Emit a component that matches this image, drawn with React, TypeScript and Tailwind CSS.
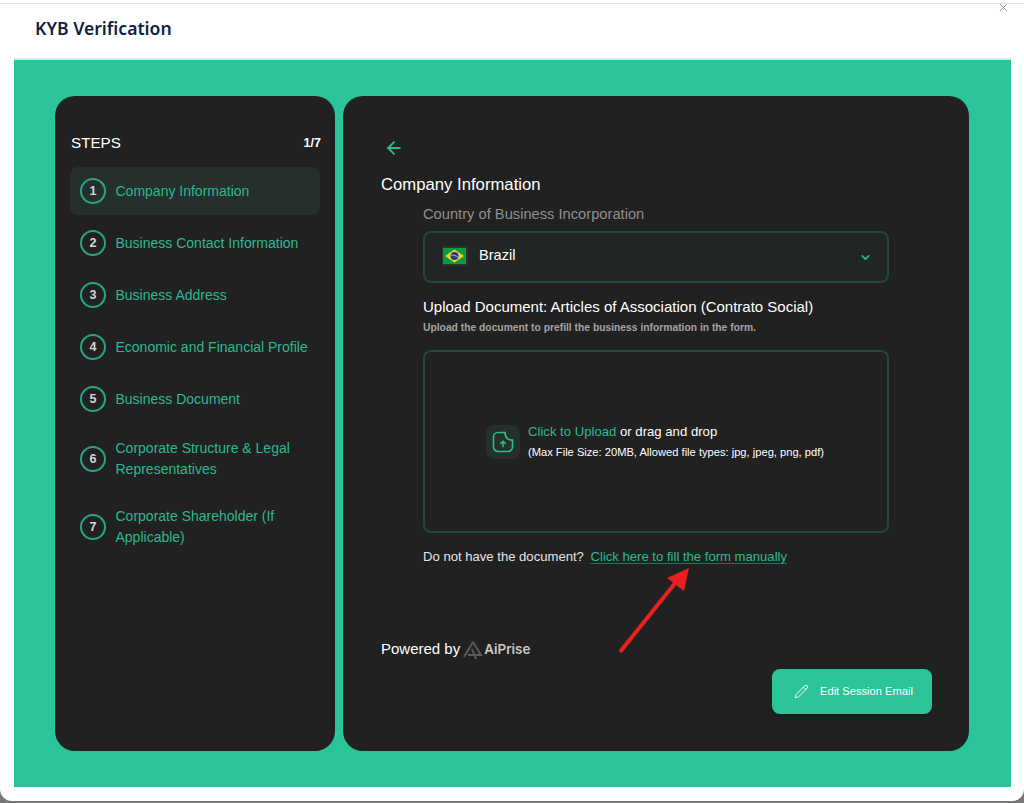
import { ArrowLeft, ChevronDown, Pencil, X } from "lucide-react";

const steps = [
  "Company Information",
  "Business Contact Information",
  "Business Address",
  "Economic and Financial Profile",
  "Business Document",
  "Corporate Structure & Legal Representatives",
  "Corporate Shareholder (If Applicable)",
];

function StepsPanel() {
  return (
    <div className="w-[280px] h-[655px] shrink-0 rounded-[20px] bg-[#212121] pl-[15px] pr-[14px] pt-[37px]">
      <div className="flex items-center justify-between h-[20px] mb-[14px]">
        <span className="ml-[1px] text-[15.2px] text-white">STEPS</span>
        <span className="text-[12.5px] font-bold text-white">1/7</span>
      </div>
      <div className="flex flex-col gap-1 mr-[1px]">
        {steps.map((step, i) => (
          <div
            key={step}
            className={`flex items-center gap-[9.5px] min-h-[48px] py-[11px] px-[10px] rounded-lg ${i === 0 ? "bg-[#252f2c]" : ""}`}
          >
            <div className="w-[26px] h-[26px] shrink-0 rounded-full border-2 border-[#27a583] flex items-center justify-center text-[12.5px] font-bold text-[#d5d5d5]">
              {i + 1}
            </div>
            <span className="text-[14px] leading-[21px] text-[#2bb98f]">{step}</span>
          </div>
        ))}
      </div>
    </div>
  );
}

function BrazilFlag() {
  return (
    <svg width="26" height="20" viewBox="0 0 26 20" className="shrink-0">
      <rect width="26" height="20" fill="#2a3330" />
      <rect x="1" y="2" width="23" height="16" fill="#0b9b3a" />
      <polygon points="12.5,3.5 22,10 12.5,16.5 3,10" fill="#f4d21f" />
      <circle cx="12.5" cy="10" r="4" fill="#1c3f8f" />
      <path d="M8.8 9.2 C11 8.8 14 9.6 16.2 11.4" stroke="#e8e8e8" strokeWidth="0.7" fill="none" />
    </svg>
  );
}

function UploadFileIcon() {
  return (
    <svg width="22" height="22" viewBox="0 0 22 22" fill="none" stroke="#2bb98f" strokeWidth="1.6" strokeLinecap="round" strokeLinejoin="round">
      <path d="M13 1.5H6A4.5 4.5 0 0 0 1.5 6v10A4.5 4.5 0 0 0 6 20.5h10a4.5 4.5 0 0 0 4.5-4.5V9" />
      <path d="M13 1.5c0 4.5 2.5 7.5 7.5 7.5" />
      <path d="M11 15.5v-5M8.8 12.4 11 10.2l2.2 2.2" />
    </svg>
  );
}

function AiPriseLogo() {
  return (
    <svg width="20" height="20" viewBox="0 0 20 20" fill="none" stroke="#5a5a5a" strokeWidth="2" className="shrink-0 mt-[2px]">
      <path d="M1 17 10 2" />
      <path d="M10 2 18 15" />
      <path d="M5 15H19" />
      <path d="M9 9 13 19" />
    </svg>
  );
}

function FormPanel() {
  return (
    <div className="flex-1 h-[655px] rounded-[20px] bg-[#212121] pl-[38px] pt-[42px] flex flex-col">
      <ArrowLeft size={20} strokeWidth={2.2} className="text-[#2bb98f] ml-[3px]" />
      <h2 className="mt-[15px] text-[16.7px] leading-[24px] text-white">Company Information</h2>
      <div className="ml-[42px] w-[466px]">
        <p className="mt-[7px] text-[14.7px] leading-[20px] text-[#8f8f8f]">Country of Business Incorporation</p>
        <div className="mt-[7px] h-[52px] rounded-lg border-2 border-[#24483f] bg-[#212624] flex items-center pl-[17px] pr-[15px] pb-[2px]">
          <BrazilFlag />
          <span className="ml-[11px] text-[14.6px] text-white">Brazil</span>
          <ChevronDown size={13} strokeWidth={3} className="ml-auto mt-[2px] text-[#2bb98f]" />
        </div>
        <p className="mt-[13px] text-[15px] leading-[22px] text-white">Upload Document: Articles of Association (Contrato Social)</p>
        <p className="mt-[3px] text-[10.3px] leading-[14px] font-bold text-[#a3a3a3]">Upload the document to prefill the business information in the form.</p>
        <div className="mt-[15px] h-[183px] rounded-lg border-2 border-[#24483f] flex items-center pl-[61px]">
          <div className="w-[34px] h-[34px] rounded-lg bg-[#253029] flex items-center justify-center">
            <UploadFileIcon />
          </div>
          <div className="ml-[8px]">
            <p className="text-[13.15px] leading-[20px] text-white">
              <span className="text-[#2bb98f]">Click to Upload</span> or drag and drop
            </p>
            <p className="text-[11.15px] leading-[20px] font-medium text-white">(Max File Size: 20MB, Allowed file types: jpg, jpeg, png, pdf)</p>
          </div>
        </div>
        <p className="mt-[15px] text-[13.1px] leading-[18px] text-[#e5e5e5]">
          Do not have the document?{" "}
          <a className="ml-[3px] text-[#2bb98f] underline underline-offset-2 decoration-[#24735d]">Click here to fill the form manually</a>
        </p>
      </div>
      <div className="mt-[72px] flex items-center h-[22px]">
        <span className="text-[15px] text-white">Powered by</span>
        <span className="ml-[3px]"><AiPriseLogo /></span>
        <span className="ml-[1px] text-[13.4px] font-semibold text-[#c9c9c9] font-['Inter',sans-serif]">AiPrise</span>
      </div>
      <button className="mt-[9px] mr-[37px] self-end w-[160px] h-[45px] rounded-lg bg-[#2bc398] shadow-md flex items-center pl-[22px] text-white">
        <Pencil size={15} strokeWidth={1.5} />
        <span className="ml-[11px] text-[11.15px]">Edit Session Email</span>
      </button>
    </div>
  );
}

export default function App() {
  return (
    <div className="relative w-[1024px] h-[803px] overflow-hidden bg-[#777777] font-['Liberation_Sans',Arial,sans-serif]">
      <div className="h-[801px] rounded-b-xl bg-white pt-[3px]">
        <div className="h-[55px] border-t border-[#e3e3e3] pl-[35px] pt-[10px]">
          <h1 className="font-['Noto_Sans',sans-serif] text-[17.6px] leading-[28px] font-semibold text-[#0f1f3f]">KYB Verification</h1>
        </div>
        <div className="ml-[14px] w-[997px] h-[729px] border-t-2 border-[#e3e3e3] bg-[#2bc398] pl-[41px] pt-[36px] flex gap-[8px]">
          <StepsPanel />
          <div className="mr-[42px] flex-1 flex">
            <FormPanel />
          </div>
        </div>
      </div>
      <X size={13} strokeWidth={1.5} className="absolute left-[997px] top-[1px] text-[#8a8a8a]" />
      <svg className="absolute left-[614px] top-[562px]" width="80" height="95" viewBox="0 0 80 95">
        <line x1="6" y1="90" x2="62" y2="20" stroke="#e8201f" strokeWidth="4" />
        <polygon points="75,6 53,16 70,29" fill="#e8201f" />
      </svg>
    </div>
  );
}
